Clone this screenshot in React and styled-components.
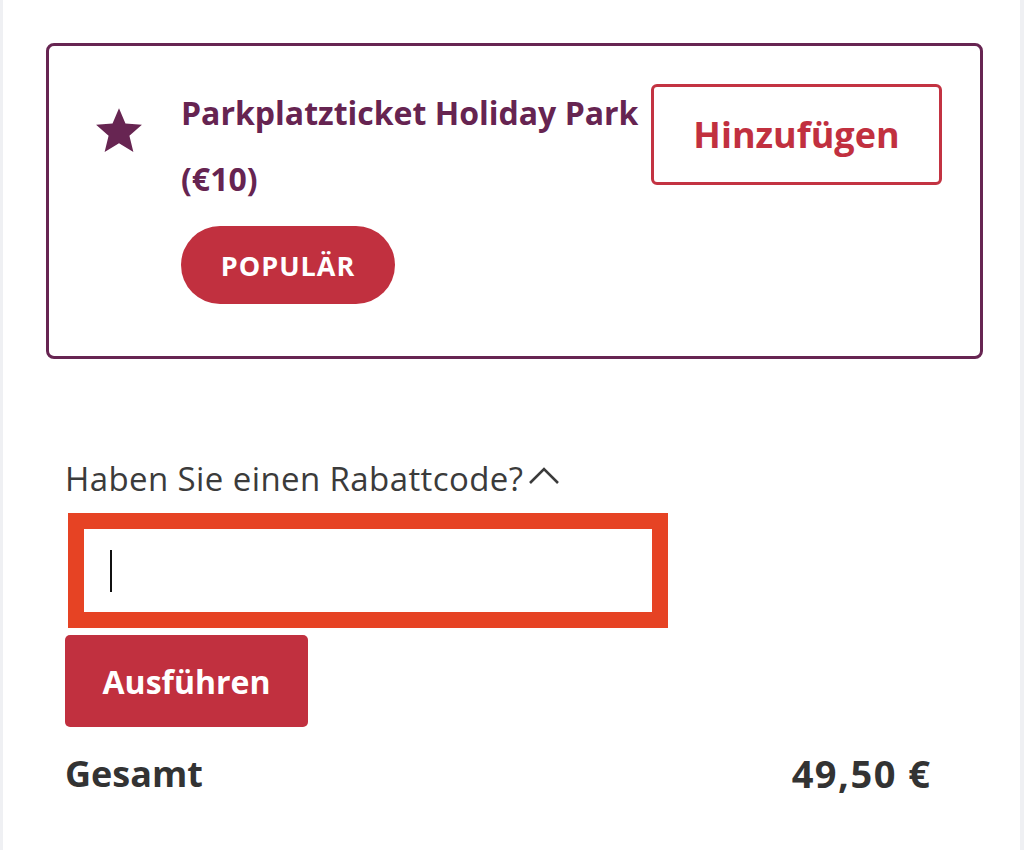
import React from 'react';
import styled, { createGlobalStyle } from 'styled-components';

const GlobalStyle = createGlobalStyle`
    body {
        margin: 0;
        background: #ffffff;
        font-family: "Open Sans", Lato, Arial, sans-serif;
    }
`;

const Page = styled.div`
    min-height: 850px;
    box-sizing: border-box;
    border-left: 3px solid #eff0f3;
    border-right: 4px solid #eff0f3;
    padding: 43px 37px 40px 43px;
`;

const Card = styled.div`
    display: flex;
    align-items: flex-start;
    border: 3px solid #672552;
    border-radius: 8px;
    padding: 38px 38px 52px 44px;
`;

const StarIcon = styled.svg`
    width: 52px;
    height: 50px;
    flex-shrink: 0;
    margin-top: 21px;
    fill: #672552;
`;

const Info = styled.div`
    display: flex;
    flex-direction: column;
    align-items: flex-start;
    margin-left: 36px;
    flex: 1;
`;

const Title = styled.div`
    font-size: 32px;
    font-weight: 700;
    line-height: 40px;
    color: #662451;
    margin-top: ${(p) => p.$top}px;
    white-space: nowrap;
`;

const Pill = styled.div`
    margin-top: 27px;
    height: 78px;
    width: 214px;
    border-radius: 39px;
    background: #c1303f;
    color: #ffffff;
    font-size: 27px;
    font-weight: 700;
    letter-spacing: 1px;
    display: flex;
    align-items: center;
    justify-content: center;
`;

const AddButton = styled.button`
    flex-shrink: 0;
    width: 291px;
    height: 101px;
    margin-left: 10px;
    box-sizing: border-box;
    background: #ffffff;
    border: 3px solid #c33342;
    border-radius: 6px;
    color: #c1303f;
    font-family: inherit;
    font-size: 36px;
    font-weight: 700;
`;

const Discount = styled.div`
    padding: 100px 0 0 19px;
`;

const Question = styled.div`
    display: flex;
    align-items: center;
    font-size: 33px;
    letter-spacing: 0.4px;
    color: #3b3b3b;
    line-height: 40px;
`;

const Chevron = styled.svg`
    width: 34px;
    height: 22px;
    margin-left: 4px;
    margin-top: -9px;
`;

const CodeField = styled.div`
    width: 600px;
    height: 115px;
    box-sizing: border-box;
    margin: 14px 0 0 3px;
    border: 16px solid #e64324;
    background: #ffffff;
    display: flex;
    align-items: center;
`;

const Caret = styled.span`
    width: 2px;
    height: 42px;
    background: #111111;
    margin-left: 26px;
`;

const ApplyButton = styled.button`
    display: block;
    margin-top: 7px;
    width: 243px;
    height: 92px;
    border: none;
    border-radius: 5px;
    background: #c1303f;
    color: #ffffff;
    font-family: inherit;
    font-size: 32px;
    font-weight: 700;
`;

const TotalRow = styled.div`
    display: flex;
    justify-content: space-between;
    align-items: center;
    margin-top: 20px;
    padding-right: 53px;
    font-size: 36px;
    font-weight: 700;
    color: #333333;
`;

const Amount = styled.span`
    font-size: 38px;
    letter-spacing: 1.5px;
    margin-right: -1.5px;
`;

const App = () => {
    return (
        <>
            <GlobalStyle />
            <Page>
                <Card>
                    <StarIcon viewBox="0 0 24 24">
                        <path d="M12 1.5l3.1 7.4 7.9.6-6 5.2 1.9 7.8L12 18.3l-6.9 4.2L7 14.7 1 9.5l7.9-.6z" />
                    </StarIcon>
                    <Info>
                        <Title $top={9}>Parkplatzticket Holiday Park</Title>
                        <Title $top={26}>(€10)</Title>
                        <Pill>POPULÄR</Pill>
                    </Info>
                    <AddButton>Hinzufügen</AddButton>
                </Card>
                <Discount>
                    <Question>
                        Haben Sie einen Rabattcode?
                        <Chevron viewBox="0 0 34 22">
                            <path d="M3 19L17 5l14 14" fill="none" stroke="#3b3b3b" strokeWidth="2.6" />
                        </Chevron>
                    </Question>
                    <CodeField>
                        <Caret />
                    </CodeField>
                    <ApplyButton>Ausführen</ApplyButton>
                    <TotalRow>
                        <span>Gesamt</span>
                        <Amount>49,50 €</Amount>
                    </TotalRow>
                </Discount>
            </Page>
        </>
    );
};

export default App;
